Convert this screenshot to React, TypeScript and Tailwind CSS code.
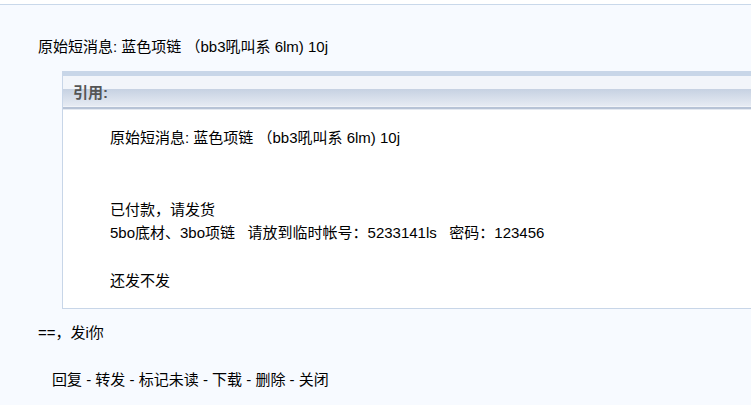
import React from 'react';

const ACTIONS = ['回复', '转发', '标记未读', '下载', '删除', '关闭'];

const App: React.FC = () => {
  return (
    <div
      className="w-[751px] h-[405px] overflow-hidden bg-[#f7faff] text-[15px] text-black"
      style={{ fontFamily: '"Liberation Sans", "Noto Sans CJK SC", sans-serif' }}
    >
      <div className="h-[4px] bg-white" />
      <div className="h-px bg-[#c9d8ea]" />

      <div className="pl-[38px] pt-[30px] leading-[24px]">
        原始短消息: 蓝色项链 （bb3吼叫系 6lm) 10j
      </div>

      {/* 引用框 */}
      <div className="ml-[62px] mt-[12px] -mr-[20px] border-l border-b border-[#c8d6e8] bg-white">
        <div className="h-[5px] bg-[#c8d6e8]" />
        <div className="h-[13px] bg-[#f2f5fa]" />
        <div className="h-[17px] bg-gradient-to-b from-[#c6d1e2] to-[#e6ebf3] relative">
          <span className="absolute left-[10px] -top-[8px] text-[15px] font-bold text-[#555] leading-[24px]">
            引用:
          </span>
        </div>
        <div className="h-px bg-[#f0f3f8]" />
        <div className="h-[2px] bg-[#b7c3d6]" />
        <div className="h-px bg-[#e4e9f1]" />

        <div className="pl-[47px] pt-[16px] pb-[15px] leading-[24px]">
          <div>原始短消息: 蓝色项链 （bb3吼叫系 6lm) 10j</div>
          <div className="h-[48px]" />
          <div>已付款，请发货</div>
          <div className="-mt-px">5bo底材、3bo项链&nbsp;&nbsp; 请放到临时帐号：5233141ls&nbsp;&nbsp; 密码：123456</div>
          <div className="h-[24px]" />
          <div>还发不发</div>
        </div>
      </div>

      <div className="pl-[38px] pt-[12px] leading-[24px]">==，发i你</div>

      <div className="pl-[52px] pt-[23px] leading-[24px]">
        {ACTIONS.map((a, i) => (
          <span key={a}>
            {i > 0 && ' - '}
            {a}
          </span>
        ))}
      </div>
    </div>
  );
};

export default App;
